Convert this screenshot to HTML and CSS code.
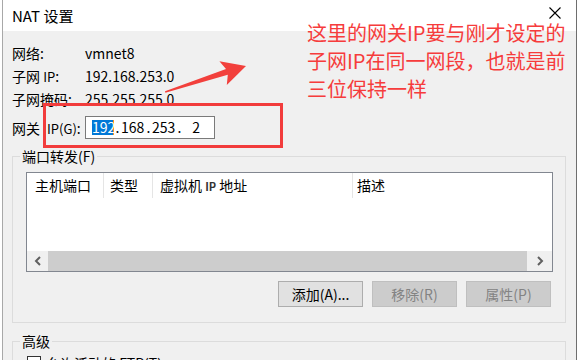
FILE: index.html
```html
<!DOCTYPE html>
<html lang="zh-CN">
<head>
<meta charset="utf-8">
<title>NAT 设置</title>
<link rel="stylesheet" href="styles.css">
</head>
<body>
<div class="win">
  <div class="titlebar">
    <span class="title">NAT 设置</span>
    <svg class="close" viewBox="0 0 12 12"><path d="M0.5 0.5 L11.5 11.5 M11.5 0.5 L0.5 11.5" stroke="#000" stroke-width="1.1" fill="none"/></svg>
  </div>
  <div class="content">
    <div class="info">
      <span>网络:</span><span>vmnet8</span>
      <span>子网 <span class="sm">IP</span>:</span><span>192.168.253.0</span>
      <span>子网掩码:</span><span>255.255.255.0</span>
    </div>
    <div class="gw">
      <span class="gw-label">网关<span class="sm gwip">IP(G)</span>:</span>
      <div class="ipbox">
        <span class="sel">192</span><span class="dot">.</span><span class="num">168</span><span class="dot">.</span><span class="num">253</span><span class="dot">.</span><span class="num last">2</span>
      </div>
    </div>
    <fieldset class="group">
      <legend>端口转发(F)</legend>
      <div class="list">
        <div class="lhead">
          <div class="col c1">主机端口</div>
          <div class="col c2">类型</div>
          <div class="col c3">虚拟机 <span class="tiny">IP</span> 地址</div>
          <div class="col c4">描述</div>
        </div>
        <div class="lbody"></div>
        <div class="hscroll">
          <div class="sbtn"><svg width="8" height="10" viewBox="0 0 8 10"><polyline points="6,1 2,5 6,9" fill="none" stroke="#606060" stroke-width="2"/></svg></div>
          <div class="thumb"></div>
          <div class="sbtn r"><svg width="8" height="10" viewBox="0 0 8 10"><polyline points="2,1 6,5 2,9" fill="none" stroke="#606060" stroke-width="2"/></svg></div>
        </div>
      </div>
      <div class="btns">
        <div class="btn">添加(A)...</div>
        <div class="btn dis">移除(R)</div>
        <div class="btn dis">属性(P)</div>
      </div>
    </fieldset>
    <fieldset class="group adv">
      <legend>高级</legend>
      <div class="chk"><span class="box"></span><span>允许活动的 FTP(T)</span></div>
    </fieldset>
  </div>
</div>
<div class="redbox"></div>
<svg class="arrow" viewBox="0 0 579 360"><polygon points="165,91.3 226,69 219.4,61.2 246,66 226.8,85 227.8,74.8 165.4,92.8" fill="#f2403c"/></svg>
<div class="note">这里的网关IP要与刚才设定的<br>子网IP在同一网段，也就是前<br>三位保持一样</div>
</body>
</html>
```

FILE: styles.css
```css
* { box-sizing: border-box; }
html, body { margin: 0; }
body {
  width: 579px;
  height: 360px;
  overflow: hidden;
  position: relative;
  background: #fff;
  font-family: "Noto Sans CJK SC", "Noto Sans", sans-serif;
  font-size: 14px;
  color: #000;
}
.win {
  margin-left: 2px;
  width: 575px;
  height: 360px;
  border-left: 1px solid #a8a8a8;
  border-right: 1px solid #6e6e6e;
  display: flex;
  flex-direction: column;
}
.titlebar {
  height: 31px;
  flex: none;
  background: #fff;
  display: flex;
  align-items: center;
  padding-left: 9px;
}
.title { font-size: 15px; line-height: 20px; }
.close {
  margin-left: auto;
  margin-right: 15px;
  align-self: flex-start;
  margin-top: 7px;
  width: 12px;
  height: 12px;
}
.content {
  flex: 1;
  background: #f0f0f0;
  padding: 11px 0 0 9px;
}
.info {
  display: grid;
  grid-template-columns: 73px auto;
  grid-auto-rows: 23px;
  line-height: 23px;
}
.sm { font-size: 13px; }
.gw {
  display: flex;
  align-items: center;
  margin-top: 5px;
  height: 23px;
}
.gw-label { width: 73px; white-space: nowrap; }
.gwip { margin-left: 7px; }
.ipbox {
  width: 130px;
  height: 23px;
  border: 1px solid #7a7a7a;
  background: #fff;
  display: flex;
  align-items: center;
  padding-left: 6px;
  line-height: 15px;
}
.sel {
  width: 22px;
  background: #0078d7;
  color: #fff;
  border-right: 1px solid #f7931e;
}
.dot { width: 7px; text-align: center; }
.num { width: 24px; }
.num.last { width: 17px; text-align: right; }

.group {
  margin: 8px 0 0;
  padding: 0 0 15px;
  border: 1px solid #dcdcdc;
  width: 554px;
  min-width: 0;
}
.group legend {
  margin-left: 7px;
  padding: 0 2px;
  line-height: 18px;
  font-size: 14px;
}
.list {
  margin: 7px 0 0 13px;
  width: 527px;
  height: 100px;
  border: 1px solid #828790;
  background: #fff;
  display: flex;
  flex-direction: column;
}
.lhead { display: flex; height: 25px; line-height: 25px; flex: none; }
.col { height: 25px; border-right: 1px solid #e5e5e5; white-space: nowrap; }
.c1 { width: 77px; padding-left: 8px; }
.c2 { width: 49px; padding-left: 6px; }
.c3 { width: 200px; padding-left: 7px; }
.c4 { flex: 1; border-right: none; padding-left: 4px; }
.tiny { font-size: 11px; font-weight: bold; color: #333; }
.lbody { flex: 1; }
.hscroll { height: 20px; flex: none; display: flex; background: #f0f0f0; }
.sbtn { width: 21px; display: flex; align-items: center; justify-content: center; }
.sbtn.r { width: 25px; }
.thumb { flex: 1; background: #cdcdcd; }

.btns {
  display: flex;
  justify-content: flex-end;
  gap: 9px;
  margin: 9px 14px 0 0;
}
.btn {
  width: 85px;
  height: 26px;
  border: 1px solid #adadad;
  background: #e1e1e1;
  display: flex;
  align-items: center;
  justify-content: center;
  line-height: 1;
}
.btn.dis { background: #cccccc; border-color: #bfbfbf; color: #838383; }

.adv { margin-top: 9px; }
.chk {
  display: flex;
  align-items: center;
  gap: 5px;
  margin: 5px 0 0 14px;
  line-height: 16px;
}
.box { width: 14px; height: 14px; border: 1px solid #333; background: #fff; }

.redbox {
  position: absolute;
  left: 43px;
  top: 103px;
  width: 240px;
  height: 45px;
  border: 3px solid #f23c3c;
}
.arrow {
  position: absolute;
  left: 0;
  top: 0;
  width: 579px;
  height: 360px;
  pointer-events: none;
}
.note {
  position: absolute;
  left: 307px;
  top: 19px;
  font-size: 20px;
  line-height: 28px;
  color: #f63c3c;
  white-space: nowrap;
}
```
